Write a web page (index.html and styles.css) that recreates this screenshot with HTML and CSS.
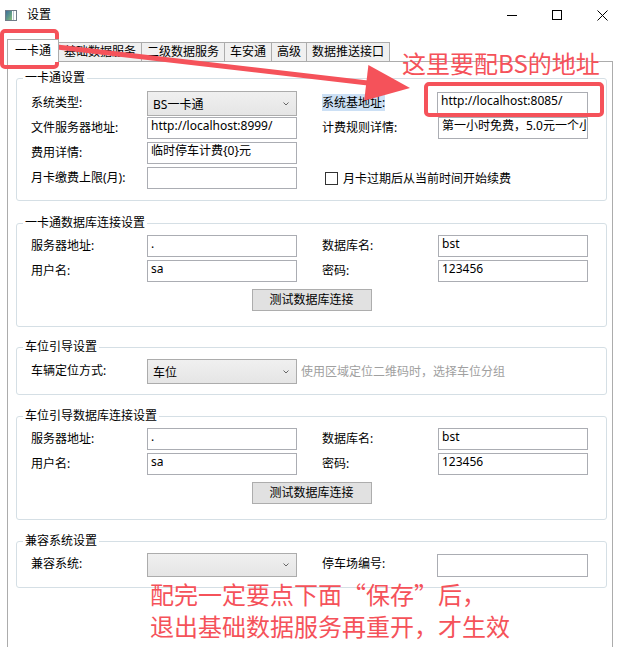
FILE: index.html
```html
<!DOCTYPE html>
<html lang="zh-CN">
<head>
<meta charset="utf-8">
<title>设置</title>
<link rel="stylesheet" href="styles.css">
</head>
<body>
<div class="window">
  <header class="titlebar">
    <svg class="app-icon" width="12" height="11" viewBox="0 0 12 11">
      <defs>
        <linearGradient id="iconFill" x1="0" y1="0" x2="1" y2="1">
          <stop offset="0" stop-color="#3f6f9c"/>
          <stop offset="0.55" stop-color="#5f9a8a"/>
          <stop offset="1" stop-color="#8cbf7a"/>
        </linearGradient>
      </defs>
      <rect x="0.5" y="0.5" width="11" height="10" fill="#fff" stroke="#6f7c88"/>
      <rect x="1" y="1" width="6" height="9" fill="url(#iconFill)"/>
      <rect x="8" y="1" width="1" height="9" fill="#b9c4ce"/>
    </svg>
    <span class="title">设置</span>
    <div class="caption">
      <svg width="10" height="10" viewBox="0 0 10 10"><line x1="0" y1="5.5" x2="10" y2="5.5" stroke="#000"/></svg>
      <svg width="10" height="10" viewBox="0 0 10 10"><rect x="0.5" y="0.5" width="9" height="9" fill="none" stroke="#000"/></svg>
      <svg width="11" height="11" viewBox="0 0 11 11"><path d="M0.5 0.5 L10.5 10.5 M10.5 0.5 L0.5 10.5" stroke="#000" fill="none"/></svg>
    </div>
  </header>

  <div class="tab-strip">
    <div class="tab tab-active">一卡通</div>
    <div class="tab">基础数据服务</div>
    <div class="tab">二级数据服务</div>
    <div class="tab">车安通</div>
    <div class="tab">高级</div>
    <div class="tab">数据推送接口</div>
  </div>

  <div class="tab-panel">
    <fieldset class="group">
      <legend>一卡通设置</legend>
      <div class="form form-card">
        <span class="label label-tall">系统类型:</span>
        <div class="combo"><span>BS一卡通</span><svg class="chevron" width="6" height="4" viewBox="0 0 6 4"><path d="M0.5 0.5 L3 3 L5.5 0.5" fill="none" stroke="#666"/></svg></div>
        <span class="label label-right label-tall"><span class="selected-text">系统基地址:</span></span>
        <div class="textbox textbox-url">http://localhost:8085/</div>

        <span class="label">文件服务器地址:</span>
        <div class="textbox">http://localhost:8999/</div>
        <span class="label label-right">计费规则详情:</span>
        <div class="textbox">第一小时免费，5.0元一个小时</div>

        <span class="label">费用详情:</span>
        <div class="textbox">临时停车计费{0}元</div>

        <span class="label">月卡缴费上限(月):</span>
        <div class="textbox"></div>
        <label class="check"><span class="check-box"></span><span>月卡过期后从当前时间开始续费</span></label>
      </div>
    </fieldset>

    <fieldset class="group group-db group-first-db">
      <legend>一卡通数据库连接设置</legend>
      <div class="form">
        <span class="label">服务器地址:</span>
        <div class="textbox">.</div>
        <span class="label label-right">数据库名:</span>
        <div class="textbox">bst</div>

        <span class="label">用户名:</span>
        <div class="textbox">sa</div>
        <span class="label label-right">密码:</span>
        <div class="textbox">123456</div>
      </div>
      <div class="actions"><div class="btn">测试数据库连接</div></div>
    </fieldset>

    <fieldset class="group group-single group-guide">
      <legend>车位引导设置</legend>
      <div class="form">
        <span class="label label-tall">车辆定位方式:</span>
        <div class="combo"><span>车位</span><svg class="chevron" width="6" height="4" viewBox="0 0 6 4"><path d="M0.5 0.5 L3 3 L5.5 0.5" fill="none" stroke="#666"/></svg></div>
        <span class="hint">使用区域定位二维码时，选择车位分组</span>
      </div>
    </fieldset>

    <fieldset class="group group-db">
      <legend>车位引导数据库连接设置</legend>
      <div class="form">
        <span class="label">服务器地址:</span>
        <div class="textbox">.</div>
        <span class="label label-right">数据库名:</span>
        <div class="textbox">bst</div>

        <span class="label">用户名:</span>
        <div class="textbox">sa</div>
        <span class="label label-right">密码:</span>
        <div class="textbox">123456</div>
      </div>
      <div class="actions"><div class="btn">测试数据库连接</div></div>
    </fieldset>

    <fieldset class="group group-single group-compat">
      <legend>兼容系统设置</legend>
      <div class="form form-compat">
        <span class="label">兼容系统:</span>
        <div class="combo combo-short"><span></span><svg class="chevron" width="6" height="4" viewBox="0 0 6 4"><path d="M0.5 0.5 L3 3 L5.5 0.5" fill="none" stroke="#666"/></svg></div>
        <span class="label label-right">停车场编号:</span>
        <div class="textbox textbox-low"></div>
      </div>
    </fieldset>
  </div>

  <div class="markup">
    <svg class="markup-shapes" width="618" height="647" viewBox="0 0 618 647">
      <rect x="2" y="31" width="55" height="36" rx="3" fill="none" stroke="#f5525a" stroke-width="4"/>
      <rect x="426" y="84" width="176" height="31" rx="3" fill="none" stroke="#f5525a" stroke-width="4"/>
      <line x1="57" y1="47" x2="370" y2="83.3" stroke="#f5525a" stroke-width="5"/>
      <polygon points="410,88 368.4,65 364.2,100.8" fill="#f5525a"/>
    </svg>
    <div class="note note-top">这里要配BS的地址</div>
    <div class="note note-bottom">配完一定要点下面“保存”后，<br>退出基础数据服务再重开，才生效</div>
  </div>
</div>
</body>
</html>
```

FILE: styles.css
```css
* {
  box-sizing: border-box;
}

html,
body {
  margin: 0;
  padding: 0;
  background: #fff;
}

body {
  font-family: "Noto Sans", "Noto Sans CJK SC", sans-serif;
  font-size: 12px;
  color: #000;
}

.window {
  position: relative;
  width: 618px;
  height: 647px;
  overflow: hidden;
  background: #fff;
}

/* ---- title bar ---- */
.titlebar {
  display: flex;
  align-items: center;
  height: 30px;
  padding-left: 5px;
}

.app-icon {
  display: block;
  flex: none;
}

.title {
  margin-left: 10px;
  line-height: 16px;
}

.caption {
  margin-left: auto;
  display: flex;
  align-items: center;
  gap: 35px;
  padding-right: 10px;
}

.caption svg {
  display: block;
}

/* ---- tabs ---- */
.tab-strip {
  display: flex;
  align-items: flex-end;
  height: 22px;
  margin-top: 9px;
  padding-left: 7px;
}

.tab {
  height: 19px;
  padding: 0 5px;
  margin-left: -1px;
  border: 1px solid #acacac;
  border-bottom: 0;
  background: #f0f0f0;
  line-height: 17px;
  white-space: nowrap;
}

.tab-active {
  position: relative;
  z-index: 1;
  height: 23px;
  margin-left: 0;
  margin-bottom: -1px;
  padding: 0 7px;
  background: #fff;
  line-height: 21px;
}

.tab-panel {
  width: 606px;
  height: 620px;
  margin-left: 7px;
  border: 1px solid #acacac;
  border-bottom: 0;
  padding: 8px 5px 0 8px;
}

/* ---- group boxes ---- */
.group {
  margin: 0;
  padding: 0;
  min-width: 0;
  border: 1px solid #d5dfe5;
  border-radius: 3px;
}

.group + .group {
  margin-top: 13px;
}

.group + .group-first-db {
  margin-top: 14px;
}

.group + .group-guide {
  margin-top: 12px;
}

.group legend {
  margin-left: 6px;
  padding: 0 2px;
  line-height: 16px;
}

.form {
  display: grid;
  grid-template-columns: 116px 150px 25px 116px 150px;
  grid-auto-rows: 25px;
  align-items: start;
  padding: 4px 14px 0;
}

.form-card {
  grid-template-rows: 26px 25px 25px 25px;
  padding: 5px 14px 8px;
}

.group-single .form {
  padding-bottom: 10px;
}

.form-compat {
  grid-auto-rows: 24px;
}

.label {
  grid-column: 1;
  line-height: 22px;
  white-space: nowrap;
}

.label-tall {
  line-height: 24px;
}

.label-right {
  grid-column: 4;
}

.selected-text {
  background: #cce0f5;
}

.textbox {
  height: 22px;
  padding-left: 3px;
  border: 1px solid #abadb3;
  background: #fff;
  line-height: 16px;
  white-space: nowrap;
  overflow: hidden;
}

.textbox-url {
  margin-left: -1px;
  margin-top: 1px;
}

.textbox-low {
  height: 23px;
  margin-top: 1px;
  margin-left: -1px;
}

.combo {
  display: flex;
  align-items: center;
  justify-content: space-between;
  height: 25px;
  padding: 0 7px 0 5px;
  border: 1px solid #acacac;
  background: linear-gradient(#f0f0f0, #e5e5e5);
  white-space: nowrap;
}

.combo-short {
  height: 24px;
}

.chevron {
  display: block;
  flex: none;
}

.hint {
  grid-column: 3 / span 3;
  padding-left: 4px;
  line-height: 25px;
  color: #a0a0a0;
  white-space: nowrap;
}

.check {
  grid-column: 4 / span 2;
  display: flex;
  align-items: center;
  gap: 5px;
  height: 22px;
  padding-left: 3px;
  white-space: nowrap;
}

.check-box {
  width: 13px;
  height: 13px;
  border: 1px solid #333;
  background: #fff;
}

.group-db {
  padding-bottom: 15px;
}

.actions {
  display: flex;
  justify-content: center;
  margin-top: 4px;
  padding: 0 14px;
}

.btn {
  width: 120px;
  height: 22px;
  border: 1px solid #adadad;
  background: #e1e1e1;
  line-height: 20px;
  text-align: center;
}

/* ---- red markup drawn on top ---- */
.markup {
  position: absolute;
  inset: 0;
  pointer-events: none;
}

.markup-shapes {
  position: absolute;
  left: 0;
  top: 0;
}

.note {
  position: absolute;
  font-family: "Noto Sans CJK SC", sans-serif;
  font-size: 24px;
  color: #f5525a;
  white-space: nowrap;
}

.note-top {
  left: 402px;
  top: 49px;
  line-height: 28px;
}

.note-bottom {
  left: 150px;
  top: 578px;
  line-height: 32px;
}
```
